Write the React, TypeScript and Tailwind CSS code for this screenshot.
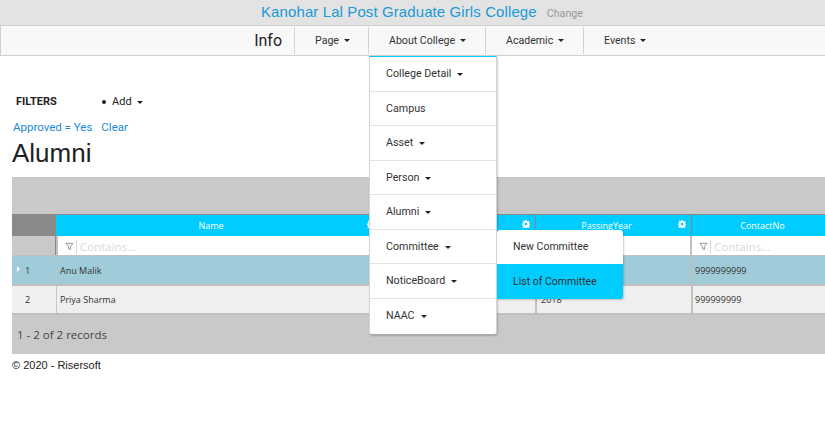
import React from "react";

const Caret = ({ className = "" }: { className?: string }) => (
  <span className={`inline-block w-0 h-0 border-x-[3px] border-x-transparent border-t-[3px] border-t-[#222] align-middle ${className}`} />
);

const Gear = ({ className = "" }: { className?: string }) => (
  <svg viewBox="0 0 16 16" className={`w-[8px] h-[8px] ${className}`} fill="#fff">
    <path fillRule="evenodd" d="M6.5 0h3l.4 2.3 1.4.6L13.2 1.5l2.1 2.1-1.4 1.9.6 1.4 2.3.4v3l-2.3.4-.6 1.4 1.4 1.9-2.1 2.1-1.9-1.4-1.4.6-.4 2.3h-3l-.4-2.3-1.4-.6-1.9 1.4-2.1-2.1 1.4-1.9-.6-1.4L-.1 10V7l2.3-.4.6-1.4-1.4-1.9 2.1-2.1 1.9 1.4 1.4-.6zM8 5.5a2.7 2.7 0 1 0 0 5.4 2.7 2.7 0 0 0 0-5.4z" />
  </svg>
);

const FilterCell = ({ w, label = true }: { w: string; label?: boolean }) => (
  <div className={`${w} shrink-0 h-full bg-white border-l-2 border-[#c0c0c0] flex items-center pl-[7px] pt-[2px] text-[11.5px] text-[#d8d8d8]`}>
    {label && (
      <>
        <svg viewBox="0 0 10 10" className="w-[9px] h-[9px]" fill="none" stroke="#8a8a8a" strokeWidth="1">
          <path d="M1 1.5h8L6 5v3.5L4 7.5V5z" />
        </svg>
        <span className="ml-[2px] h-[14px] w-px bg-[#d8d8d8]" />
        <span className="ml-[3px]">Contains...</span>
      </>
    )}
  </div>
);

const MenuItem = ({ label, caret = true, last = false }: { label: string; caret?: boolean; last?: boolean }) => (
  <div className={`h-[34.5px] flex items-center pl-[16px] pt-[1px] text-[10.7px] text-[#333] ${last ? "" : "border-b border-[#e3e3e3]"}`}>
    {label}
    {caret && <Caret className="ml-[6px] mt-[1px]" />}
  </div>
);

const NavItem = ({ label, w, pl }: { label: string; w: string; pl: string }) => (
  <div className={`${w} ${pl} h-[27px] border-r border-[#d4d4d4] flex items-center text-[10.6px] text-[#333]`}>
    {label}
    <Caret className="ml-[5px]" />
  </div>
);

export default function App() {
  return (
    <div className="relative w-[825px] h-[432px] overflow-hidden bg-white" style={{ fontFamily: "Roboto, sans-serif" }}>
      <div className="h-[25px] bg-[#e3e3e3] flex items-center justify-center pl-[19px]">
        <span className="text-[15px] text-[#1a9ad6] tracking-[0.1px]" style={{ fontFamily: "'Liberation Sans', sans-serif" }}>
          Kanohar Lal Post Graduate Girls College
        </span>
        <span className="ml-[10px] mt-[3px] text-[10.7px] text-[#999]">Change</span>
      </div>

      <div className="h-[31px] bg-[#f8f8f8] border border-[#d0d0d0] border-r-0 flex items-center">
        <div className="w-[294px] h-[27px] border-r border-[#d4d4d4] flex items-center justify-end pr-[12px] text-[16px] text-[#222]">
          Info
        </div>
        <NavItem label="Page" w="w-[74px]" pl="pl-[20px]" />
        <NavItem label="About College" w="w-[117px]" pl="pl-[20px]" />
        <NavItem label="Academic" w="w-[98px]" pl="pl-[20px]" />
        <div className="pl-[20px] flex items-center text-[10.6px] text-[#333]">
          Events
          <Caret className="ml-[5px]" />
        </div>
      </div>

      <div className="mt-[38px] ml-[16px] flex items-center h-[16px] text-[#222]">
        <span className="w-[86px] text-[11px] font-bold">FILTERS</span>
        <span className="w-[4px] h-[4px] rounded-full bg-[#222]" />
        <span className="ml-[6px] text-[11px]">Add</span>
        <Caret className="ml-[5px]" />
      </div>

      <div className="mt-[10px] ml-[13px] h-[16px] flex items-center text-[11.5px] text-[#1a8ad6]">
        <span>Approved = Yes</span>
        <span className="ml-[9px]">Clear</span>
      </div>

      <div className="ml-[12px] h-[33px] flex items-center text-[26px] leading-none text-[#222]" style={{ fontFamily: "'Liberation Sans', sans-serif" }}>
        Alumni
      </div>

      <div className="ml-[12px] w-[813px] h-[177px] mt-[8px] bg-[#c9c9c9] overflow-hidden text-[#333]" style={{ fontFamily: "'Open Sans', sans-serif" }}>
        <div className="h-[37px]" />
        <div className="h-[22px] flex border-t border-[#888] text-[9px] text-white">
          <div className="w-[44px] shrink-0 bg-[#8a8a8a]" />
          <div className="w-[324px] shrink-0 bg-[#00ccff] relative flex items-center justify-center pr-[14px]">
            Name
            <Gear className="absolute right-[5px] top-[5px]" />
          </div>
          <div className="w-[155px] shrink-0 bg-[#00ccff] border-l border-[#888] flex items-start justify-end pr-[5px] pt-[5px]">
            <Gear />
          </div>
          <div className="w-[156px] shrink-0 bg-[#00ccff] border-l border-[#888] relative flex items-center justify-center pr-[14px]">
            PassingYear
            <Gear className="absolute right-[5px] top-[5px]" />
          </div>
          <div className="flex-1 bg-[#00ccff] border-l border-[#888] flex items-center justify-center pl-[8px]">ContactNo</div>
        </div>
        <div className="h-[20px] flex border-b border-[#c0c0c0]">
          <div className="w-[44px] shrink-0 border-r border-[#888]" />
          <FilterCell w="w-[323px]" />
          <FilterCell w="w-[155px]" label={false} />
          <FilterCell w="w-[156px]" label={false} />
          <FilterCell w="flex-1" />
        </div>
        <div className="h-[30px] flex bg-[#a0cbd9] text-[9px] border-b-2 border-[#c0c0c0]">
          <div className="w-[44px] shrink-0 flex items-center pl-[5px] pt-[1px]">
            <span className="w-0 h-0 border-y-[3px] border-y-transparent border-l-[3px] border-l-white mb-[3px]" />
            <span className="ml-[5px]">1</span>
          </div>
          <div className="w-[324px] shrink-0 flex items-center pl-[3px] pt-[1px] border-l border-[#b5c5cb]">Anu Malik</div>
          <div className="w-[155px] shrink-0" />
          <div className="w-[156px] shrink-0" />
          <div className="flex-1 flex items-center pl-[2px] pt-[1px] border-l-2 border-[#c0c0c0]">9999999999</div>
        </div>
        <div className="h-[29px] flex bg-[#efefef] text-[9px] border-b-2 border-[#c0c0c0]">
          <div className="w-[44px] shrink-0 flex items-center pl-[13px] pt-[1px]">2</div>
          <div className="w-[324px] shrink-0 flex items-center pl-[3px] pt-[1px] border-l border-[#c8c8c8]">Priya Sharma</div>
          <div className="w-[155px] shrink-0" />
          <div className="w-[156px] shrink-0 flex items-center pl-[4px] pt-[1px] border-l-2 border-[#c0c0c0]">2018</div>
          <div className="flex-1 flex items-center pl-[2px] pt-[1px] border-l-2 border-[#c0c0c0]">999999999</div>
        </div>
        <div className="h-[39px] flex items-center pl-[5px] pt-[1px] text-[11.5px] text-[#444]">1 - 2 of 2 records</div>
      </div>

      <div className="ml-[12px] mt-[4px] text-[11px] leading-[14px] text-[#222]" style={{ fontFamily: "'Liberation Sans', sans-serif" }}>
        © 2020 - Risersoft
      </div>

      <div className="absolute left-[369px] top-[56px] w-[128px] h-[279px] bg-white border-t border-t-[#00ccff] border-x border-b border-x-[#d4d4d4] border-b-[#aaa] rounded-b-[3px] shadow-[1px_1px_2px_rgba(0,0,0,0.2)]">
        <MenuItem label="College Detail" />
        <MenuItem label="Campus" caret={false} />
        <MenuItem label="Asset" />
        <MenuItem label="Person" />
        <MenuItem label="Alumni" />
        <MenuItem label="Committee" />
        <MenuItem label="NoticeBoard" />
        <MenuItem label="NAAC" last />
      </div>

      <div className="absolute left-[497px] top-[230px] w-[126px] h-[69px] bg-white rounded-[3px] rounded-bl-none shadow-[1px_1px_2px_rgba(0,0,0,0.2)] overflow-hidden text-[10.5px] text-[#333]">
        <div className="h-[34px] flex items-center pl-[16px]">New Committee</div>
        <div className="h-[35px] flex items-center pl-[16px] pt-[1px] bg-[#00ccff]">List of Committee</div>
      </div>
    </div>
  );
}
